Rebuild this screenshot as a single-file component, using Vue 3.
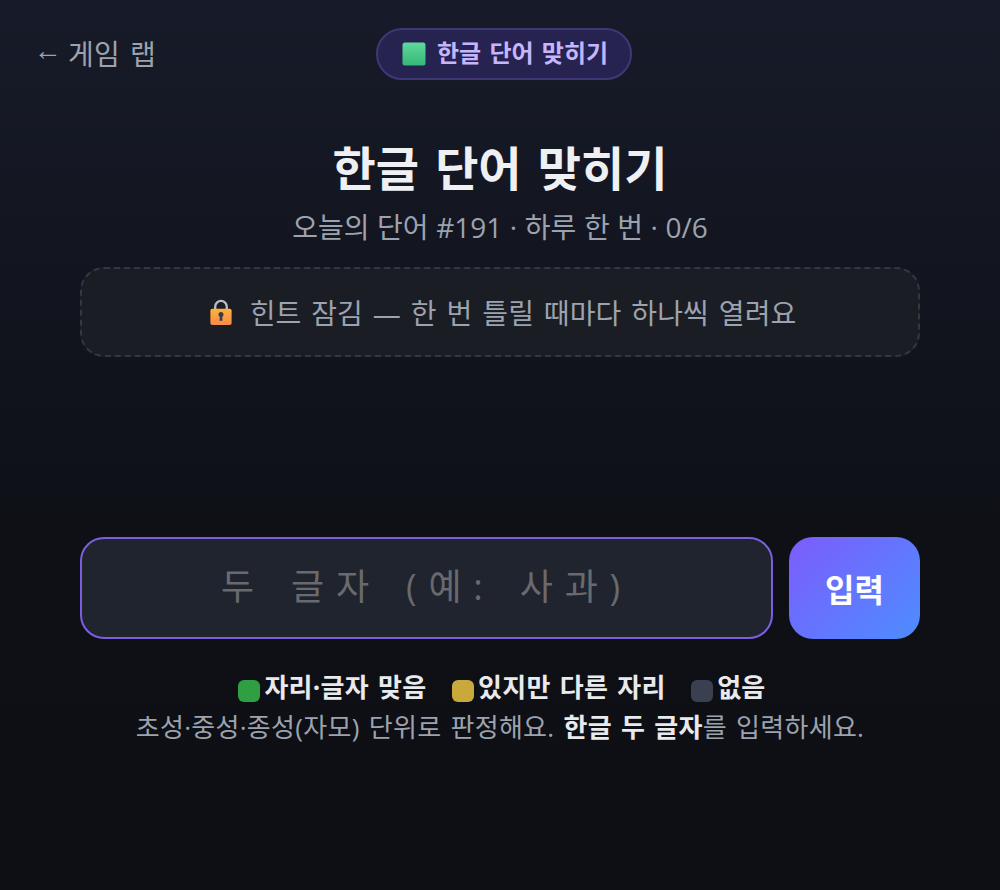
<script setup>
const legend = [
  { label: "자리·글자 맞음", color: "#2ea043" },
  { label: "있지만 다른 자리", color: "#c9a83c" },
  { label: "없음", color: "#3a4050" },
];
</script>

<template>
  <div class="page">
    <header class="top">
      <a class="back" href="#"><span class="arrow">←</span><span>게임 랩</span></a>
      <div class="chip">
        <svg class="chip-icon" width="24" height="24" viewBox="0 0 24 24">
          <defs>
            <linearGradient id="sq" x1="0" y1="0" x2="0" y2="1">
              <stop offset="0" stop-color="#5fd89c" />
              <stop offset="1" stop-color="#35b877" />
            </linearGradient>
          </defs>
          <rect x="0.5" y="0.5" width="23" height="23" rx="2.5" fill="url(#sq)" />
        </svg>
        <span class="chip-text">한글 단어 맞히기</span>
      </div>
      <div class="spacer"></div>
    </header>

    <main class="wrap">
      <h1 class="title">한글 단어 맞히기</h1>
      <p class="sub">오늘의 단어 #191 · 하루 한 번 · 0/6</p>

      <div class="hint">
        <svg class="lock" width="24" height="27" viewBox="0 0 24 28">
          <defs>
            <linearGradient id="lk" x1="0" y1="0" x2="0" y2="1">
              <stop offset="0" stop-color="#fdb33c" />
              <stop offset="1" stop-color="#f98a4b" />
            </linearGradient>
          </defs>
          <path d="M6 13V8a6 6 0 0 1 12 0v5" fill="none" stroke="#b9bcc4" stroke-width="2.4" />
          <rect x="1" y="10" width="22" height="17" rx="2" fill="url(#lk)" />
          <circle cx="12" cy="16" r="2.6" fill="#3d3a4a" />
          <path d="M10.9 17h2.2l.5 5.5h-3.2z" fill="#3d3a4a" />
        </svg>
        <span>힌트 잠김 — 한 번 틀릴 때마다 하나씩 열려요</span>
      </div>

      <form class="entry" @submit.prevent>
        <input class="word-input" type="text" placeholder="두 글자 (예: 사과)" />
        <button class="submit" type="submit">입력</button>
      </form>

      <div class="legend">
        <span v-for="item in legend" :key="item.label" class="legend-item">
          <i class="swatch" :style="{ background: item.color }"></i>{{ item.label }}
        </span>
      </div>
      <p class="note">초성·중성·종성(자모) 단위로 판정해요. <b>한글 두 글자</b>를 입력하세요.</p>
    </main>
  </div>
</template>

<style>
html,
body {
  margin: 0;
  background: #0d0f14;
}
</style>

<style scoped>
.page {
  min-height: 890px;
  box-sizing: border-box;
  background: linear-gradient(180deg, #171b29 0%, #0e1016 60%, #0d0f14 100%);
  color: #e8eaed;
  font-family: "Open Sans", "Noto Sans CJK KR", sans-serif;
}

.top {
  display: flex;
  align-items: center;
  justify-content: space-between;
  height: 52px;
  padding: 28px 36px 0;
}

.back {
  display: flex;
  gap: 6px;
  height: 52px;
  color: #9ca3af;
  font-size: 28px;
  line-height: 52px;
  letter-spacing: 0.4px;
  word-spacing: 2px;
  text-decoration: none;
}

.arrow {
  margin: -3px 0 0 -2.5px;
  font-family: "Liberation Sans", sans-serif;
  font-size: 28px;
}

.spacer {
  width: 112px;
}

.chip {
  display: flex;
  align-items: center;
  gap: 11px;
  height: 52px;
  box-sizing: border-box;
  padding: 0 22px 0 24px;
  border: 2px solid #403777;
  border-radius: 26px;
  background: #262350;
  color: #c4b5fd;
  font-size: 24px;
  font-weight: 700;
  word-spacing: 2px;
}

.chip-text {
  line-height: 32px;
  height: 32px;
  margin-top: -3px;
}

.wrap {
  width: 840px;
  margin: 0 auto;
  text-align: center;
}

.title {
  margin: 56px 0 0;
  height: 64px;
  font-size: 47px;
  line-height: 64px;
  font-weight: 700;
  word-spacing: 4px;
  color: #eef0f3;
}

.sub {
  margin: 9px 0 0;
  height: 36px;
  color: #9ca3af;
  font-size: 28px;
  line-height: 36px;
  word-spacing: 0.3px;
}

.hint {
  display: flex;
  align-items: center;
  justify-content: center;
  gap: 17px;
  height: 90px;
  margin-top: 22px;
  padding-left: 5px;
  box-sizing: border-box;
  border: 2px dashed #323743;
  border-radius: 24px;
  background: #1a1d23;
  color: #9ca3af;
  font-size: 28px;
  letter-spacing: 0.1px;
  word-spacing: 2.5px;
}

.entry {
  display: flex;
  gap: 16px;
  margin-top: 180px;
}

.word-input {
  flex: 1;
  min-width: 0;
  height: 102px;
  box-sizing: border-box;
  padding: 0 0 4px;
  border: 2px solid #7c5fe0;
  border-radius: 24px;
  background: #1f242e;
  color: #f0f2f5;
  font-family: inherit;
  font-size: 36px;
  letter-spacing: 11.8px;
  word-spacing: 4px;
  text-align: center;
  outline: none;
}

.word-input::placeholder {
  color: #686a6e;
}

.submit {
  width: 131px;
  height: 102px;
  border: none;
  border-radius: 24px;
  background: linear-gradient(135deg, #7c5cfc, #4d8dff);
  color: #fff;
  font-family: inherit;
  font-size: 32px;
  font-weight: 700;
}

.legend {
  display: flex;
  justify-content: center;
  gap: 25.5px;
  margin-top: 31px;
  padding-left: 4px;
  height: 34px;
  font-size: 26px;
  font-weight: 700;
  line-height: 34px;
  letter-spacing: 0.3px;
  word-spacing: 2px;
}

.legend-item {
  display: flex;
  align-items: center;
  gap: 4px;
}

.swatch {
  width: 22px;
  height: 22px;
  margin-top: 8px;
  border-radius: 6px;
}

.note {
  margin: 6px 0 0;
  color: #9ca3af;
  font-size: 26px;
  line-height: 34px;
  letter-spacing: 0.3px;
  word-spacing: 2px;
}

.note b {
  color: #e8eaed;
}
</style>
